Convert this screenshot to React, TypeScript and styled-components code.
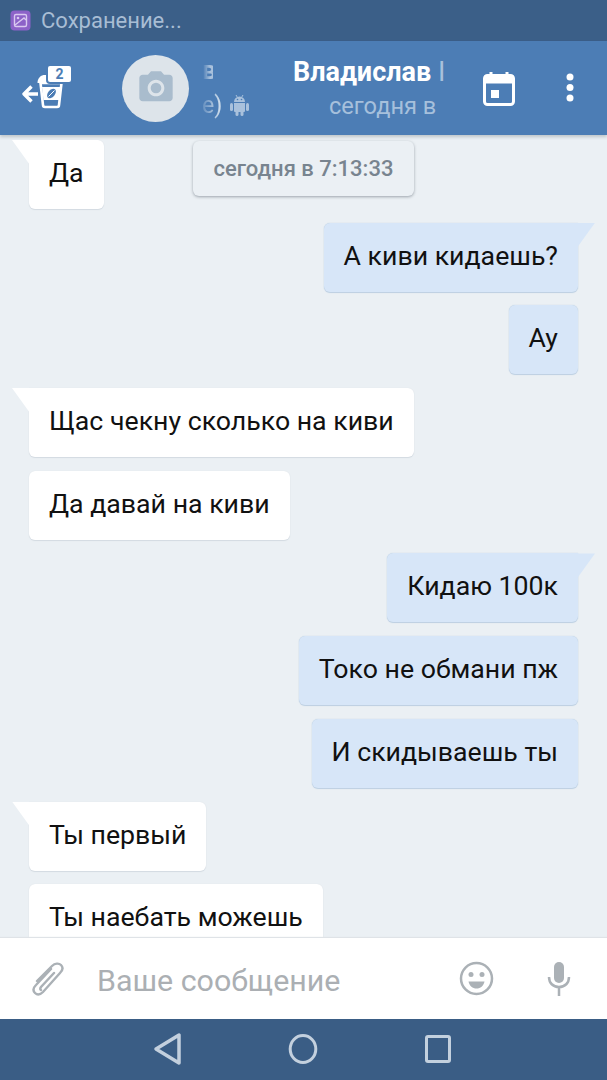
import React from 'react';
import styled, { createGlobalStyle } from 'styled-components';
import { MdPhotoCamera } from 'react-icons/md';

const GlobalStyle = createGlobalStyle`
  html, body {
    margin: 0;
    padding: 0;
    background: #ebf0f4;
  }
  * {
    box-sizing: border-box;
  }
`;

const Screen = styled.div`
  display: flex;
  flex-direction: column;
  font-family: Roboto, "Liberation Sans", sans-serif;
  height: 1080px;
  overflow: hidden;
  width: 607px;
`;

const StatusBar = styled.div`
  align-items: center;
  background: #3b5f88;
  color: #a8bdd4;
  display: flex;
  flex: 0 0 41px;
  font-size: 22px;
  gap: 10px;
  padding: 0 0 1px 10px;
`;

const Header = styled.header`
  align-items: center;
  background: #4c7db5;
  box-shadow: 0 2px 3px rgba(60, 70, 80, 0.25);
  display: flex;
  flex: 0 0 94px;
  position: relative;
  z-index: 2;
`;

const BackButton = styled.div`
  flex: 0 0 122px;
  height: 94px;
  position: relative;

  svg {
    left: 22px;
    position: absolute;
    top: 30px;
  }
`;

const BackBadge = styled.span`
  background: #fff;
  border-radius: 2px;
  box-shadow: 0 0 0 2px #4c7db5;
  color: #4c7db5;
  font-size: 14px;
  font-weight: 700;
  height: 16px;
  left: 48px;
  line-height: 16px;
  position: absolute;
  text-align: center;
  top: 25px;
  width: 23px;
`;

const Avatar = styled.div`
  align-items: center;
  background: #dde4ea;
  border-radius: 50%;
  color: #a9bccd;
  display: flex;
  flex: 0 0 67px;
  height: 67px;
  justify-content: center;
`;

const ClippedPeer = styled.div`
  display: flex;
  flex: 0 0 104px;
  flex-direction: column;
  gap: 8px;
  padding-left: 12px;
`;

const PeerName = styled.div`
  color: #a9c1dc;
  font-size: 25px;
  font-weight: 700;
  line-height: 26px;
  mask-image: linear-gradient(to right, transparent 15%, #000 75%);
  padding-left: 1px;
  width: 12px;
`;

const PeerStatus = styled.div`
  align-items: center;
  color: #dbe6f1;
  display: flex;
  font-size: 23px;
  gap: 8px;
  height: 26px;
  padding-left: 1px;

  svg {
    color: #a9c1dc;
  }
`;

const FadedText = styled.span`
  mask-image: linear-gradient(to right, rgba(0, 0, 0, 0.15), #000);
`;

const Peer = styled.div`
  display: flex;
  flex: 0 0 168px;
  flex-direction: column;
  gap: 4px;
`;

const Name = styled.div`
  color: #fff;
  font-size: 27px;
  font-weight: 700;
  line-height: 32px;
  white-space: nowrap;
`;

const NameCut = styled.span`
  color: #a9c1dc;
  font-weight: 400;
`;

const Seen = styled.div`
  color: #a6c0dc;
  font-size: 23.6px;
  line-height: 28px;
  padding-left: 36px;
`;

const HeaderAction = styled.div<{ $width: number }>`
  align-items: center;
  display: flex;
  flex: 0 0 ${(p) => p.$width}px;
  justify-content: center;
`;

const Chat = styled.main`
  background: #ebf0f4;
  display: flex;
  flex: 1;
  flex-direction: column;
  gap: 13.7px;
  min-height: 0;
  overflow: hidden;
  padding: 5px 29px 0;
  position: relative;
`;

const DatePill = styled.div`
  background: #ebf0f4;
  border-radius: 6px;
  box-shadow: 0 1px 3px rgba(60, 70, 85, 0.45);
  color: #78848f;
  font-size: 22px;
  font-weight: 500;
  left: 193px;
  line-height: 55px;
  position: absolute;
  text-align: center;
  top: 6px;
  width: 221px;
`;

const Bubble = styled.div<{ $out?: boolean; $tail?: boolean }>`
  align-self: ${(p) => (p.$out ? 'flex-end' : 'flex-start')};
  background: ${(p) => (p.$out ? '#d7e6f8' : '#fff')};
  border-radius: 6px;
  ${(p) => p.$tail && (p.$out ? 'border-top-right-radius: 0;' : 'border-top-left-radius: 0;')}
  box-shadow: 0 1px 1px ${(p) => (p.$out ? '#bccfe2' : '#d3dae1')}, 0 0 1px ${(p) => (p.$out ? '#a9c0d8' : '#d3dae1')};
  color: #111;
  flex: 0 0 69px;
  font-size: 26.7px;
  line-height: 67px;
  padding: 0 20px;
  position: relative;
  white-space: nowrap;

  ${(p) =>
    p.$tail &&
    `
    &::before {
      background: ${p.$out ? '#d7e6f8' : '#fff'};
      clip-path: polygon(${p.$out ? '0 0, 100% 0, 0 100%' : '0 0, 100% 0, 100% 100%'});
      content: '';
      height: 25px;
      position: absolute;
      top: 0;
      ${p.$out ? 'right: -17px;' : 'left: -17px;'}
      width: 18px;
    }
  `}
`;

const Composer = styled.footer`
  align-items: center;
  background: #fff;
  box-shadow: 0 -1px 1px #dfe3e7;
  display: flex;
  flex: 0 0 81px;
  gap: 26px;
  padding-right: 20px;
  position: relative;
`;

const AttachButton = styled.div`
  align-items: center;
  display: flex;
  flex: 0 0 71px;
  padding-left: 30px;
`;

const Placeholder = styled.div`
  color: #abafb3;
  flex: 1;
  font-size: 30.4px;
  padding-top: 3px;
`;

const ComposerAction = styled.div<{ $width: number }>`
  align-items: center;
  display: flex;
  flex: 0 0 ${(p) => p.$width}px;
  justify-content: center;
`;

const NavBar = styled.nav`
  align-items: center;
  background: #3a5d85;
  display: flex;
  flex: 0 0 61px;
  gap: 105px;
  justify-content: center;
  padding: 0 1px 1px 0;
`;

const messages = [
  { text: 'Да', tail: true },
  { text: 'А киви кидаешь?', out: true, tail: true },
  { text: 'Ау', out: true },
  { text: 'Щас чекну сколько на киви', tail: true },
  { text: 'Да давай на киви' },
  { text: 'Кидаю 100к', out: true, tail: true },
  { text: 'Токо не обмани пж', out: true },
  { text: 'И скидываешь ты', out: true },
  { text: 'Ты первый', tail: true },
  { text: 'Ты наебать можешь' }
];

function App (): React.ReactElement {
  return (
    <Screen>
      <GlobalStyle />
      <StatusBar>
        <svg width='21' height='21' viewBox='0 0 21 21'>
          <rect width='20' height='20' x='0.5' y='0.5' rx='4' fill='#8c62c8' />
          <rect x='4.5' y='4.5' width='12' height='12' rx='1.5' fill='none' stroke='#d9c8f0' strokeWidth='1.4' />
          <circle cx='8' cy='8' r='1.3' fill='#d9c8f0' />
          <path d='M5 15l9-7 2 2' fill='none' stroke='#d9c8f0' strokeWidth='1.4' />
        </svg>
        Сохранение...
      </StatusBar>
      <Header>
        <BackButton>
          <svg width='50' height='40' viewBox='0 0 50 40'>
            <path d='M2 23h14M9.500 15.500L2 23l7.500 7.500' fill='none' stroke='#fff' strokeWidth='3.400' strokeLinejoin='round' />
            <path d='M18.500 12h21l-2.500 22a2 2 0 0 1-2 2H23a2 2 0 0 1-2-2z' fill='none' stroke='#fff' strokeWidth='2.600' />
            <path d='M15.500 12c0-4 2-7 6-8h14v8z' fill='#fff' />
            <path d='M20 16h19l-1.800 13H21.500z' fill='#fff' />
            <ellipse cx='29.500' cy='22.500' rx='5.500' ry='3.500' transform='rotate(-50 29.500 22.500)' fill='#4c7db5' />
            <path d='M26.500 25.500l6-6' stroke='#fff' strokeWidth='1' />
          </svg>
          <BackBadge>2</BackBadge>
        </BackButton>
        <Avatar>
          <MdPhotoCamera size={40} />
        </Avatar>
        <ClippedPeer>
          <PeerName>в</PeerName>
          <PeerStatus>
            <FadedText>е)</FadedText>
            <svg width='19' height='21' viewBox='0 0 19 21' fill='currentColor'>
              <path d='M4 7a5.500 5.500 0 0 1 11 0z' />
              <path d='M4 8h11v8a1 1 0 0 1-1 1H5a1 1 0 0 1-1-1z' />
              <rect x='0' y='8' width='3' height='8' rx='1.500' />
              <rect x='16' y='8' width='3' height='8' rx='1.500' />
              <rect x='5.500' y='16' width='3' height='5' rx='1.500' />
              <rect x='10.500' y='16' width='3' height='5' rx='1.500' />
              <path d='M6 0l1.500 2.500M13 0l-1.500 2.500' stroke='currentColor' strokeWidth='1' />
              <circle cx='7.500' cy='4.500' r='0.800' fill='#4c7db5' />
              <circle cx='11.500' cy='4.500' r='0.800' fill='#4c7db5' />
            </svg>
          </PeerStatus>
        </ClippedPeer>
        <Peer>
          <Name>Владислав <NameCut>I</NameCut></Name>
          <Seen>сегодня в</Seen>
        </Peer>
        <HeaderAction $width={76}>
          <svg width='32' height='35' viewBox='0 0 32 35'>
            <path d='M8 1v5M24 1v5' stroke='#fff' strokeWidth='3' />
            <rect x='1.500' y='4.500' width='29' height='29' rx='3' fill='none' stroke='#fff' strokeWidth='3' />
            <rect x='1.500' y='4.500' width='29' height='8' fill='#fff' />
            <rect x='8' y='19' width='8' height='8' fill='#fff' />
          </svg>
        </HeaderAction>
        <HeaderAction $width={66}>
          <svg width='10' height='30' viewBox='0 0 10 30'>
            <circle cx='5' cy='4' r='3.500' fill='#fff' />
            <circle cx='5' cy='14.500' r='3.500' fill='#fff' />
            <circle cx='5' cy='25' r='3.500' fill='#fff' />
          </svg>
        </HeaderAction>
      </Header>
      <Chat>
        {messages.map((m) => (
          <Bubble key={m.text} $out={m.out} $tail={m.tail}>{m.text}</Bubble>
        ))}
        <DatePill>сегодня в 7:13:33</DatePill>
      </Chat>
      <Composer>
        <AttachButton>
          <svg width='34' height='36' viewBox='0 0 34 36'>
            <path d='M21 8L6 24c-3 3-3 6-1 8s5 2 8-1L30 12c3-3 3-6 1-8s-6-2-9 1L7 20M24 12L11 26c-1 1.500-1 2.500 0 3' fill='none' stroke='#abb1b6' strokeWidth='2.400' strokeLinecap='round' />
          </svg>
        </AttachButton>
        <Placeholder>Ваше сообщение</Placeholder>
        <ComposerAction $width={56}>
          <svg width='35' height='35' viewBox='0 0 35 35'>
            <circle cx='17.500' cy='17.500' r='15.500' fill='none' stroke='#abb1b6' strokeWidth='2.500' />
            <circle cx='12' cy='13.500' r='2.500' fill='#abb1b6' />
            <circle cx='23' cy='13.500' r='2.500' fill='#abb1b6' />
            <path d='M9.500 20.500h16c-1 4.500-4 7-8 7s-7-2.500-8-7z' fill='#abb1b6' />
          </svg>
        </ComposerAction>
        <ComposerAction $width={57}>
          <svg width='24' height='34' viewBox='0 0 24 34'>
            <rect x='7' y='0' width='10' height='21' rx='5' fill='#abb1b6' />
            <path d='M2 15c0 6 4 10 10 10s10-4 10-10M12 25v9' fill='none' stroke='#abb1b6' strokeWidth='2.500' />
          </svg>
        </ComposerAction>
      </Composer>
      <NavBar>
        <svg width='30' height='34' viewBox='0 0 30 34'>
          <path d='M26 3v28L3 17z' fill='none' stroke='#c3d0de' strokeWidth='3.500' strokeLinejoin='round' />
        </svg>
        <svg width='30' height='32' viewBox='0 0 30 32'>
          <ellipse cx='15' cy='16' rx='12.800' ry='13.500' fill='none' stroke='#c3d0de' strokeWidth='3' />
        </svg>
        <svg width='30' height='30' viewBox='0 0 30 30'>
          <rect x='3.500' y='2.500' width='23' height='25' rx='1.500' fill='none' stroke='#c3d0de' strokeWidth='3' />
        </svg>
      </NavBar>
    </Screen>
  );
}

export default App;
